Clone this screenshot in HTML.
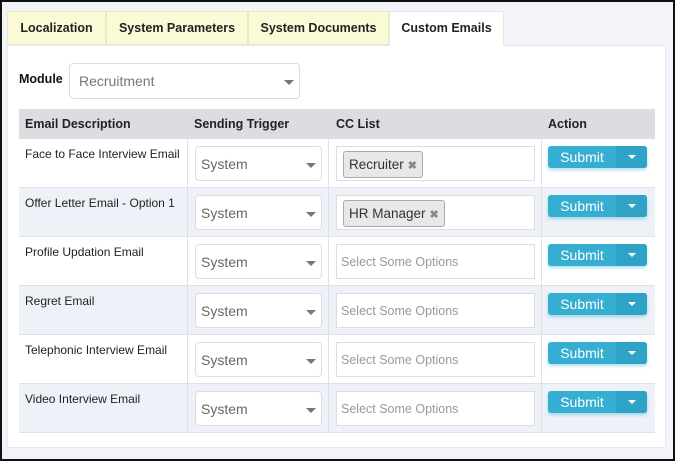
<!DOCTYPE html>
<html><head><style>
*{box-sizing:border-box;margin:0;padding:0}
body{width:675px;height:461px;background:#f3f4f9;font-family:"Liberation Sans",sans-serif;position:relative;overflow:hidden;border:2px solid #111}
.a{position:absolute}
.tab{position:absolute;top:9px;height:34px;background:#fafad6;border:1px solid #ecebc0;font-weight:bold;font-size:12.5px;color:#222;line-height:32px;text-align:center}
.panel{position:absolute;left:5px;top:43px;width:659px;height:403px;background:#fff;border:1px solid #e8e9ee}
.th{position:absolute;top:107px;height:30px;background:#dcdde0;font-weight:bold;font-size:12.5px;color:#222;line-height:30px}
.row{position:absolute;left:17px;width:636px;height:49px;border-bottom:1px solid #dfe1e6}
.cell{position:absolute;top:0;height:49px;border-left:1px solid #dfe1e6;width:1px}
.desc{position:absolute;left:6px;top:8px;font-size:12px;color:#222}
.sel{position:absolute;left:176px;top:7px;width:127px;height:35px;border:1px solid #dcdde2;border-radius:4px;background:#fff;font-size:14px;color:#666;padding:9px 0 0 5px}
.car{position:absolute;width:0;height:0;border-left:5px solid transparent;border-right:5px solid transparent;border-top:5px solid #777}
.sel .car{right:5px;top:16px}
.cc{position:absolute;left:317px;top:7px;width:199px;height:35px;border:1px solid #dcdde2;background:#fff;font-size:12.5px;color:#999;padding:10px 0 0 4px}
.tag{position:absolute;left:6px;top:4px;height:27px;border:1px solid #aaa;border-radius:3px;background:#e8e8e8;color:#333;font-size:13.5px;padding:5px 5px 0 5px}
.tag b{color:#888;font-size:11px;margin-left:4px}
.btn{position:absolute;left:529px;top:7px;width:99px;height:22px;background:#35aed1;border-radius:3px;box-shadow:0 2px 3px rgba(53,174,209,.4);color:#fff;font-size:14px}
.btn span{position:absolute;left:0;width:68px;text-align:center;top:3px}
.btn i{position:absolute;left:68px;top:0;width:31px;height:22px;background:#2fa3c6;border-radius:0 3px 3px 0}
.btn i:after{content:"";position:absolute;left:12px;top:9px;border-left:4px solid transparent;border-right:4px solid transparent;border-top:4px solid #fff}
</style></head><body>
<div class="panel"></div>
<div class="tab" style="left:5px;width:99px">Localization</div>
<div class="tab" style="left:104px;width:142px">System Parameters</div>
<div class="tab" style="left:246px;width:141px">System Documents</div>
<div class="tab" style="left:387px;width:115px;background:#fff;border-color:#e8e8dc;border-bottom:none;height:35px">Custom Emails</div>
<div class="a" style="left:17px;top:70px;font-weight:bold;font-size:12.5px;color:#111">Module</div>
<div class="a" style="left:67px;top:61px;width:231px;height:36px;border:1px solid #dcdde2;border-radius:4px;font-size:14px;color:#777;padding:9px 0 0 9px">Recruitment<div class="car" style="right:5px;top:16px"></div></div>
<div class="th" style="left:17px;width:636px"></div>
<div class="th" style="left:23px;background:none">Email Description</div>
<div class="th" style="left:192px;background:none">Sending Trigger</div>
<div class="th" style="left:334px;background:none">CC List</div>
<div class="th" style="left:546px;background:none">Action</div>

<div class="row" style="top:137px;background:#fff"><div class="cell" style="left:168px"></div><div class="cell" style="left:309px"></div><div class="cell" style="left:522px"></div><div class="desc">Face to Face Interview Email</div><div class="sel">System<div class="car"></div></div><div class="cc"><div class="tag">Recruiter<b>✖</b></div></div><div class="btn"><span>Submit</span><i></i></div></div>
<div class="row" style="top:186px;background:#eef1f7"><div class="cell" style="left:168px"></div><div class="cell" style="left:309px"></div><div class="cell" style="left:522px"></div><div class="desc">Offer Letter Email - Option 1</div><div class="sel">System<div class="car"></div></div><div class="cc"><div class="tag">HR Manager<b>✖</b></div></div><div class="btn"><span>Submit</span><i></i></div></div>
<div class="row" style="top:235px;background:#fff"><div class="cell" style="left:168px"></div><div class="cell" style="left:309px"></div><div class="cell" style="left:522px"></div><div class="desc">Profile Updation Email</div><div class="sel">System<div class="car"></div></div><div class="cc">Select Some Options</div><div class="btn"><span>Submit</span><i></i></div></div>
<div class="row" style="top:284px;background:#eef1f7"><div class="cell" style="left:168px"></div><div class="cell" style="left:309px"></div><div class="cell" style="left:522px"></div><div class="desc">Regret Email</div><div class="sel">System<div class="car"></div></div><div class="cc">Select Some Options</div><div class="btn"><span>Submit</span><i></i></div></div>
<div class="row" style="top:333px;background:#fff"><div class="cell" style="left:168px"></div><div class="cell" style="left:309px"></div><div class="cell" style="left:522px"></div><div class="desc">Telephonic Interview Email</div><div class="sel">System<div class="car"></div></div><div class="cc">Select Some Options</div><div class="btn"><span>Submit</span><i></i></div></div>
<div class="row" style="top:382px;background:#eef1f7"><div class="cell" style="left:168px"></div><div class="cell" style="left:309px"></div><div class="cell" style="left:522px"></div><div class="desc">Video Interview Email</div><div class="sel">System<div class="car"></div></div><div class="cc">Select Some Options</div><div class="btn"><span>Submit</span><i></i></div></div>
</body></html>
